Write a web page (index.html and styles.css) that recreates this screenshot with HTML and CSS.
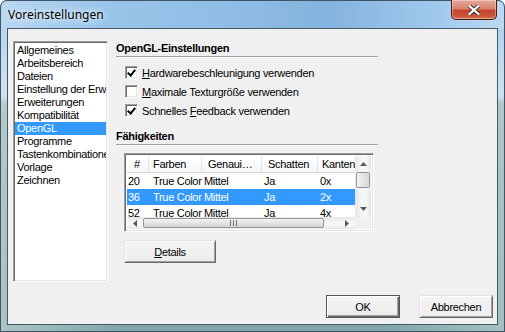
FILE: index.html
```html
<!DOCTYPE html>
<html lang="de">
<head>
    <meta charset="UTF-8">
    <title>Voreinstellungen</title>
    <link rel="stylesheet" href="styles.css">
</head>
<body>
    <div class="window">
        <!-- Titelleiste -->
        <div class="titlebar">
            <span class="title">Voreinstellungen</span>
            <button class="close-btn" aria-label="Schließen">
                <svg width="12" height="10" viewBox="0 0 12 10">
                    <path d="M1.5 1 L10.5 9 M10.5 1 L1.5 9" stroke="#3a2a28" stroke-width="4" stroke-linecap="square"/>
                    <path d="M1.5 1 L10.5 9 M10.5 1 L1.5 9" stroke="#fff" stroke-width="2.2" stroke-linecap="square"/>
                </svg>
            </button>
        </div>

        <div class="client">
            <div class="main">
                <!-- Kategorien -->
                <ul class="categories">
                    <li>Allgemeines</li>
                    <li>Arbeitsbereich</li>
                    <li>Dateien</li>
                    <li>Einstellung der Erweiterungen</li>
                    <li>Erweiterungen</li>
                    <li>Kompatibilität</li>
                    <li class="selected">OpenGL</li>
                    <li>Programme</li>
                    <li>Tastenkombinationen</li>
                    <li>Vorlage</li>
                    <li>Zeichnen</li>
                </ul>

                <div class="panel">
                    <h3 class="group-title">OpenGL-Einstellungen</h3>
                    <label class="check"><span class="box checked"></span><span><u>H</u>ardwarebeschleunigung verwenden</span></label>
                    <label class="check"><span class="box"></span><span><u>M</u>aximale Texturgröße verwenden</span></label>
                    <label class="check"><span class="box checked"></span><span>Schnelles <u>F</u>eedback verwenden</span></label>

                    <h3 class="group-title second">Fähigkeiten</h3>

                    <!-- Liste der Fähigkeiten -->
                    <div class="listview">
                        <div class="lv-body">
                            <div class="lv-content">
                                <div class="lv-row lv-header">
                                    <span class="c-num">#</span>
                                    <span class="c-col">Farben</span>
                                    <span class="c-acc">Genaui…</span>
                                    <span class="c-sha">Schatten</span>
                                    <span class="c-edge">Kanten</span>
                                </div>
                                <div class="lv-row">
                                    <span class="c-num">20</span>
                                    <span class="c-col">True Color</span>
                                    <span class="c-acc">Mittel</span>
                                    <span class="c-sha">Ja</span>
                                    <span class="c-edge">0x</span>
                                </div>
                                <div class="lv-row selected">
                                    <span class="c-num">36</span>
                                    <span class="c-col">True Color</span>
                                    <span class="c-acc">Mittel</span>
                                    <span class="c-sha">Ja</span>
                                    <span class="c-edge">2x</span>
                                </div>
                                <div class="lv-row">
                                    <span class="c-num">52</span>
                                    <span class="c-col">True Color</span>
                                    <span class="c-acc">Mittel</span>
                                    <span class="c-sha">Ja</span>
                                    <span class="c-edge">4x</span>
                                </div>
                            </div>
                            <div class="vscroll">
                                <span class="arrow"><svg width="7" height="4" viewBox="0 0 7 4"><path d="M0 4 L3.5 0 L7 4 Z" fill="#5a5a5a"/></svg></span>
                                <span class="thumb-v"></span>
                                <span class="track"></span>
                                <span class="arrow"><svg width="7" height="4" viewBox="0 0 7 4"><path d="M0 0 L3.5 4 L7 0 Z" fill="#5a5a5a"/></svg></span>
                            </div>
                        </div>
                        <div class="hscroll">
                            <span class="arrow-h"><svg width="4" height="7" viewBox="0 0 4 7"><path d="M4 0 L0 3.5 L4 7 Z" fill="#5a5a5a"/></svg></span>
                            <span class="thumb-h"><span class="grip"></span></span>
                            <span class="track"></span>
                            <span class="arrow-h"><svg width="4" height="7" viewBox="0 0 4 7"><path d="M0 0 L4 3.5 L0 7 Z" fill="#5a5a5a"/></svg></span>
                            <span class="corner"></span>
                        </div>
                    </div>

                    <button class="btn details"><u>D</u>etails</button>
                </div>
            </div>

            <!-- Dialogschaltflächen -->
            <div class="footer">
                <button class="btn default">OK</button>
                <button class="btn">Abbrechen</button>
            </div>
        </div>
    </div>
</body>
</html>
```

FILE: styles.css
```css
/* Grundlayout */
body {
    margin: 0;
    background: #fff;
    font-family: "Liberation Sans", Arial, sans-serif;
    font-size: 11px;
    letter-spacing: -0.3px;
    color: #000;
}

/* Fensterrahmen (Aero) */
.window {
    width: 505px;
    height: 332px;
    box-sizing: border-box;
    border-radius: 7px 7px 0 0;
    background:
        linear-gradient(90deg, rgba(255,255,255,0.35), rgba(255,255,255,0) 25%, rgba(255,255,255,0) 75%, rgba(255,255,255,0.3)),
        linear-gradient(180deg, #a9cdee 0px, #93c0e7 28px, #b7d6f1 96px, #8fb0ad 104px, #83a8a9 200px, #7ea5a8 100%);
    box-shadow: inset 0 0 0 1px #3f5566;
    overflow: hidden;
}

.titlebar {
    height: 28px;
    display: flex;
    justify-content: space-between;
    align-items: flex-start;
    padding: 0 8px;
    background: linear-gradient(90deg, #b9d8f2 0%, #9ac5ea 20%, #8fbde5 45%, #84b3dd 65%, #9ec7ec 85%, #bcd9f2 100%);
    border-radius: 7px 7px 0 0;
    box-shadow: inset 0 1px 0 #3f5566, inset 1px 0 0 #3f5566, inset -1px 0 0 #3f5566;
}

.title {
    font-family: "Noto Sans", "Open Sans", sans-serif;
    font-size: 12px;
    letter-spacing: 0;
    line-height: 16px;
    margin-top: 7px;
    color: #000;
    text-shadow: 0 0 8px #fff, 0 0 4px rgba(255,255,255,0.8);
}

.close-btn {
    width: 46px;
    height: 20px;
    padding: 0;
    margin: 0;
    border: 1px solid #4a1b12;
    border-top: none;
    border-radius: 0 0 5px 5px;
    background: linear-gradient(180deg, #e8a899 0%, #d98270 45%, #c6452f 55%, #cc5438 85%, #d8765c 100%);
    box-shadow: inset 0 0 0 1px rgba(255,255,255,0.35);
    display: flex;
    align-items: center;
    justify-content: center;
}

/* Clientbereich */
.client {
    margin: 0 7px;
    height: 297px;
    box-sizing: border-box;
    border: 1px solid #46596a;
    background: #f0f0f0;
    padding: 12px 4px 5px 5px;
    display: flex;
    flex-direction: column;
}

.main {
    display: flex;
    align-items: flex-start;
}

/* Vertiefte Rahmen */
.categories,
.listview,
.box {
    border: 1px solid;
    border-color: #a0a0a0 #fff #fff #a0a0a0;
    box-shadow: inset 1px 1px 0 #696969, inset -1px -1px 0 #e3e3e3;
    background: #fff;
}

.categories {
    list-style: none;
    margin: 0;
    padding: 1px 1px;
    width: 95px;
    height: 241px;
    box-sizing: border-box;
    overflow: hidden;
}

.categories li {
    height: 13px;
    line-height: 13px;
    padding-left: 2px;
    white-space: nowrap;
    overflow: hidden;
}

.categories li:first-child {
    margin-top: 1px;
}

.categories li.selected {
    background: #3399ff;
    color: #fff;
}

.panel {
    margin-left: 8px;
    width: 262px;
}

.group-title {
    margin: 0;
    font-size: 11px;
    font-weight: bold;
    line-height: 15px;
    border-bottom: 1px solid #a0a0a0;
    box-shadow: 0 1px 0 #fff;
}

.group-title.second {
    margin-top: 9px;
}

/* Kontrollkästchen */
.check {
    display: flex;
    align-items: center;
    height: 19px;
    padding-left: 9px;
}

.check:first-of-type {
    margin-top: 6px;
}

.box {
    width: 13px;
    height: 13px;
    box-sizing: border-box;
    margin-right: 4px;
    flex: none;
    position: relative;
}

.box.checked::after {
    content: "";
    position: absolute;
    left: 3px;
    top: 1px;
    width: 3px;
    height: 6px;
    border: solid #000;
    border-width: 0 2px 2px 0;
    transform: rotate(40deg);
}

/* Listenansicht */
.listview {
    margin: 8px 0 0 8px;
    width: 250px;
    height: 79px;
    box-sizing: border-box;
    padding: 2px;
    display: flex;
    flex-direction: column;
}

.lv-body {
    display: flex;
    height: 61px;
}

.lv-content {
    width: 230px;
    overflow: hidden;
    background: #fff;
}

.lv-row {
    display: flex;
    height: 16px;
    line-height: 16px;
    white-space: nowrap;
}

.lv-row span {
    flex: none;
    overflow: hidden;
    box-sizing: border-box;
    padding-left: 2px;
}

.lv-row .c-num { width: 22px; padding-left: 1px; }
.lv-row .c-col { width: 53px; padding-left: 4px; }
.lv-row .c-acc { width: 60px; }
.lv-row .c-sha { width: 56px; }
.lv-row .c-edge { width: 39px; }

.lv-row.selected {
    background: #3399ff;
    color: #fff;
}

.lv-header {
    height: 17px;
    line-height: 16px;
    background: linear-gradient(180deg, #fff 0%, #f6f7f8 100%);
    border-bottom: 1px solid #d5d5d5;
    box-sizing: border-box;
}

.lv-header span {
    border-right: 1px solid #e3e5e8;
    padding-left: 6px;
}

.lv-header .c-num { padding-left: 7px; }
.lv-header .c-edge { padding-left: 4px; border-right: none; }

.vscroll {
    width: 16px;
    display: flex;
    flex-direction: column;
    background: linear-gradient(90deg, #e6e6e6, #f6f6f6 40%, #f6f6f6 70%, #e6e6e6);
}

.vscroll .arrow {
    height: 16px;
    display: flex;
    align-items: center;
    justify-content: center;
}

.vscroll .track {
    flex: 1;
}

.thumb-v {
    height: 16px;
    margin: 0 1px;
    box-sizing: border-box;
    border: 1px solid #979797;
    border-radius: 2px;
    background: linear-gradient(90deg, #f4f4f4, #e4e4e4 50%, #d6d6d6);
}

.hscroll {
    height: 14px;
    display: flex;
    background: linear-gradient(180deg, #e6e6e6, #f6f6f6 40%, #f6f6f6 70%, #e6e6e6);
}

.hscroll .arrow-h {
    width: 16px;
    display: flex;
    align-items: center;
    justify-content: center;
}

.hscroll .track {
    flex: 1;
}

.thumb-h {
    width: 181px;
    margin: 1px 0;
    box-sizing: border-box;
    border: 1px solid #979797;
    border-radius: 2px;
    background: linear-gradient(180deg, #f4f4f4, #e4e4e4 50%, #d2d2d2);
    display: flex;
    align-items: center;
    justify-content: center;
}

.grip {
    width: 7px;
    height: 6px;
    background: repeating-linear-gradient(90deg, #707070 0 1px, transparent 1px 3px);
}

.hscroll .corner {
    width: 16px;
    background: #f0f0f0;
}

/* Schaltflächen */
.btn {
    font-family: "Liberation Sans", Arial, sans-serif;
    font-size: 11px;
    letter-spacing: -0.3px;
    color: #000;
    height: 23px;
    width: 74px;
    padding: 0;
    border: 1px solid;
    border-color: #e3e3e3 #696969 #696969 #e3e3e3;
    box-shadow: inset 1px 1px 0 #fff, inset -1px -1px 0 #a0a0a0;
    background: linear-gradient(180deg, #f4f4f4, #ededed);
}

.btn.details {
    width: 92px;
    margin: 8px 0 0 8px;
    display: block;
}

.btn.default {
    border-color: #555;
    box-shadow: inset 1px 1px 0 #fff, inset -1px -1px 0 #696969, inset -2px -2px 0 #a0a0a0;
}

.footer {
    margin-top: 13px;
    display: flex;
    justify-content: flex-end;
    gap: 19px;
}
```
